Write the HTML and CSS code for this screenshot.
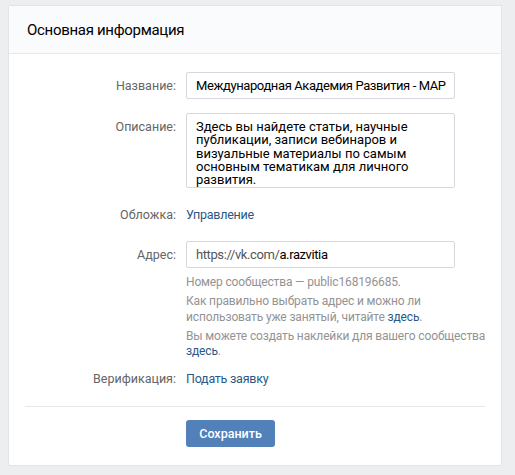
FILE: index.html
```html
<!DOCTYPE html>
<html lang="ru">
<head>
<meta charset="utf-8">
<title>Основная информация</title>
<link rel="stylesheet" href="styles.css">
</head>
<body>
<div class="card">
  <div class="card-header">Основная информация</div>
  <div class="card-body">
    <div class="row row-name">
      <div class="label">Название:</div>
      <div class="control"><div class="input">Международная Академия Развития - МАР</div></div>
    </div>
    <div class="row row-desc">
      <div class="label label-top">Описание:</div>
      <div class="control"><div class="textarea">Здесь вы найдете статьи, научные публикации, записи вебинаров и визуальные материалы по самым основным тематикам для личного развития.</div></div>
    </div>
    <div class="row row-cover">
      <div class="label">Обложка:</div>
      <div class="control"><a class="link">Управление</a></div>
    </div>
    <div class="row row-addr">
      <div class="label">Адрес:</div>
      <div class="control">
        <div class="input"><span class="prefix">https://vk.com/</span>a.razvitia</div>
      </div>
    </div>
    <div class="row row-hints">
      <div class="label"></div>
      <div class="control hints">
        <p class="hint">Номер сообщества — public168196685.</p>
        <p class="hint">Как правильно выбрать адрес и можно ли использовать уже занятый, читайте <a class="hint-link">здесь</a>.</p>
        <p class="hint">Вы можете создать наклейки для вашего сообщества <a class="hint-link">здесь</a>.</p>
      </div>
    </div>
    <div class="row row-verif">
      <div class="label">Верификация:</div>
      <div class="control"><a class="link">Подать заявку</a></div>
    </div>
    <div class="divider"></div>
    <div class="row row-actions">
      <div class="label"></div>
      <div class="control"><button class="btn">Сохранить</button></div>
    </div>
  </div>
</div>
</body>
</html>
```

FILE: styles.css
```css
html, body {
  margin: 0;
  padding: 0;
}
body {
  background: #edeef0;
  font-family: Roboto, "Liberation Sans", Arial, sans-serif;
  font-size: 13px;
  color: #000;
  padding: 5px 12px 0 8px;
}
.card {
  width: 494px;
  box-sizing: border-box;
  background: #fff;
  border: 1px solid #e3e4e8;
  border-radius: 2px;
}
.card-header {
  background: #fafbfc;
  border-bottom: 1px solid #e7e8ec;
  height: 48px;
  box-sizing: border-box;
  padding: 1px 18px 0;
  display: flex;
  align-items: center;
  font-size: 15px;
  letter-spacing: -0.3px;
  color: #000;
}
.card-body {
  padding: 18px 16px 18px 16px;
}
.row {
  display: flex;
  align-items: center;
}
.label {
  width: 151px;
  flex: none;
  padding-right: 10px;
  text-align: right;
  color: #656565;
  font-size: 12.5px;
  line-height: 17px;
}
.label-top {
  align-self: flex-start;
  padding-top: 5px;
}
.control {
  flex: 1;
  min-width: 0;
}
.input {
  width: 269px;
  height: 27px;
  box-sizing: border-box;
  border: 1px solid #d3d9de;
  border-radius: 2px;
  padding: 4px 9px;
  line-height: 17px;
  font-size: 13px;
  letter-spacing: -0.4px;
  color: #000;
  white-space: nowrap;
  overflow: hidden;
}
.prefix {
  color: #555;
}
.textarea {
  width: 269px;
  height: 75px;
  box-sizing: border-box;
  border: 1px solid #d3d9de;
  border-radius: 2px;
  padding: 6px 25px 4px 9px;
  font-size: 13px;
  line-height: 13.3px;
  color: #000;
  overflow: hidden;
}
.row-desc {
  margin-top: 14px;
}
.row-cover {
  margin-top: 18px;
}
.row-addr {
  margin-top: 18px;
}
.row-hints {
  margin-top: 7px;
  align-items: flex-start;
}
.link {
  color: #2a5885;
  font-size: 12.5px;
  letter-spacing: -0.25px;
  line-height: 17px;
  display: block;
}
.control.hints {
  flex: none;
  width: 303px;
}
.hint {
  margin: 0 0 4px;
  font-size: 12px;
  letter-spacing: -0.15px;
  line-height: 15.3px;
  color: #939393;
}
.hint:last-child {
  margin-bottom: 0;
}
.hint-link {
  color: #2a5885;
}
.row-verif {
  margin-top: 11px;
}
.divider {
  height: 1px;
  background: #e7e8ec;
  margin: 19px 0 13px;
}
.btn {
  display: block;
  width: 89px;
  height: 27px;
  box-sizing: border-box;
  border: 0;
  border-radius: 3px;
  background: #5181b8;
  color: #fff;
  font-family: Roboto, "Liberation Sans", Arial, sans-serif;
  font-size: 12.5px;
  font-weight: 500;
  padding: 0;
}
```
